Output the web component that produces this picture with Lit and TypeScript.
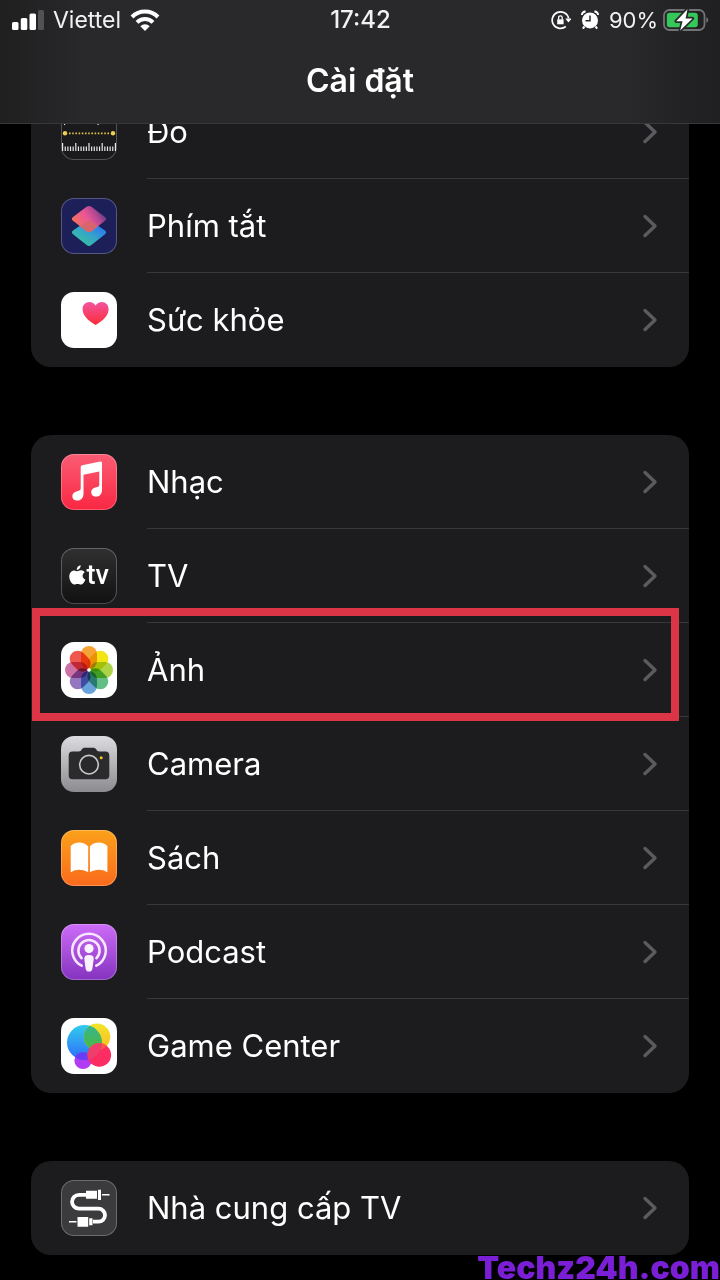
import { LitElement, html, css, svg, TemplateResult } from "lit";
import { customElement, property } from "lit/decorators.js";

/* ---------- App icons, drawn on a 56 x 56 grid ---------- */

const tick = (x: number, h: number) =>
  svg`<rect x=${x} y=${47 - h} width="1.2" height=${h} fill="#e8e8ea"/>`;

const measure = svg`
  <rect width="56" height="56" fill="#1a1a1c"/>
  ${[3, 36.5].map((x) => svg`<rect x=${x} y="16" width="1.2" height="5" fill="#e8e8ea"/>`)}
  <path d="M8 29.3H48" stroke="#e6c544" stroke-width="1.8" stroke-dasharray="1.6 1.6"/>
  <circle cx="4" cy="29.3" r="2.2" fill="#f0d050"/>
  <circle cx="52" cy="29.3" r="2.2" fill="#f0d050"/>
  ${Array.from({ length: 21 }, (_, i) =>
    tick(1 + i * 2.64, i % 5 === 0 ? 8 : 4.5)
  )}`;

const shortcuts = svg`
  <defs>
    <linearGradient id="s1" x1="0.1" y1="0.7" x2="0.9" y2="0.3">
      <stop offset="0" stop-color="#f4705c"/><stop offset="0.5" stop-color="#e8559a"/>
      <stop offset="0.8" stop-color="#b04890"/><stop offset="1" stop-color="#6a3f86"/>
    </linearGradient>
    <linearGradient id="s2" x1="0.2" y1="0.9" x2="0.8" y2="0.2">
      <stop offset="0" stop-color="#36c0a0"/><stop offset="0.5" stop-color="#35a5c8"/>
      <stop offset="1" stop-color="#2a78f0"/>
    </linearGradient>
  </defs>
  <rect width="56" height="56" fill="#1d1f59"/>
  <path d="M25.8 22.9Q28 21.6 30.2 22.9L44 32.6Q46.4 34.4 44 36.2L30.4 47Q28 48.8 25.6 47L12 36.2Q9.6 34.4 12 32.6Z" fill="url(#s2)"/>
  <path d="M25.6 8.8Q28 7 30.4 8.8L44 19Q46.4 21 44 22.8L30.4 33.2Q28 35 25.6 33.2L12 22.8Q9.6 21 12 19Z" fill="url(#s1)"/>
  <path d="M28 22.2L37 28.3L30.4 33.2Q28 35 25.6 33.2L19 28.3Z" fill="#d9656c"/>`;

const health = svg`
  <defs><linearGradient id="h1" x2="0" y2="1">
    <stop offset="0" stop-color="#f2549e"/><stop offset="1" stop-color="#fb2c37"/>
  </linearGradient></defs>
  <rect width="56" height="56" fill="#fff"/>
  <path d="M34.6 33C27 28.5 21.6 23.5 21.6 17.3C21.6 13 24.5 10 28.4 10C31 10 33.2 11.3 34.6 13.5C36 11.3 38.2 10 40.8 10C44.7 10 47.6 13 47.6 17.3C47.6 23.5 42.2 28.5 34.6 33Z" fill="url(#h1)"/>`;

const music = svg`
  <defs><linearGradient id="m1" x2="0" y2="1">
    <stop offset="0" stop-color="#fb5c74"/><stop offset="1" stop-color="#fa2742"/>
  </linearGradient></defs>
  <rect width="56" height="56" fill="url(#m1)"/>
  <path d="M39.3 7.5Q41 7.2 41 8.9V36C41 40 38.5 42.7 35 42.7C32 42.7 30.2 40.8 30.2 38.3C30.2 35.5 32.2 33.9 35 33.3C37.4 32.8 38.3 32.5 38.3 30.5V17.6L22.5 20.7V39.7C22.5 44 19.8 46.6 16.2 46.6C13.2 46.6 11.3 44.7 11.3 42.2C11.3 39.5 13.2 37.8 16 37.2C18.6 36.6 19.7 36.4 19.7 34.3V13Q19.7 11.5 21.2 11.2Z" fill="#fff"/>`;

const appleTv = svg`
  <defs><linearGradient id="t1" x2="0" y2="1">
    <stop offset="0" stop-color="#303031"/><stop offset="1" stop-color="#111112"/>
  </linearGradient></defs>
  <rect width="56" height="56" fill="url(#t1)"/>
  <path d="M19.6 17.3C19.9 19.7 18 21.9 15.8 21.9C15.5 19.7 17.5 17.5 19.6 17.3ZM16.2 23.3C17 23.3 18.2 22.3 20 22.3C21.7 22.3 23 23.1 23.7 24.2C20.7 26 21 30.2 24.4 31.5C23.7 33.5 22 36.6 20 36.6C18.7 36.6 18.2 35.9 16.6 35.9C15 35.9 14.4 36.6 13.2 36.6C11 36.6 8.3 32.7 8.3 28.6C8.3 24.6 10.8 22.4 13.2 22.4C14.6 22.4 15.6 23.3 16.2 23.3Z" fill="#fff"/>
  <text x="25.5" y="36.4" class="tv">tv</text>`;

const petals = ["#f59a23", "#f2e200", "#a6d037", "#55b878", "#5b9bd8", "#8b6bb8", "#c9669f", "#ee4a40"];
const photos = svg`
  <rect width="56" height="56" fill="#fff"/>
  <g class="petals">
    ${petals.map(
      (c, i) => svg`<rect x="20" y="4" width="16" height="23" rx="8" fill=${c}
        fill-opacity="0.92" transform="rotate(${i * 45} 28 28)"/>`
    )}
  </g>
  <circle cx="28" cy="28" r="1.8" fill="#fff"/>`;

const camera = svg`
  <defs><linearGradient id="c1" x2="0" y2="1">
    <stop offset="0" stop-color="#dcdbe0"/><stop offset="1" stop-color="#8c8b90"/>
  </linearGradient></defs>
  <rect width="56" height="56" fill="url(#c1)"/>
  <path d="M11.5 15.5H17.5C19.5 15.5 20 14.8 20.7 13.6C21.5 12.2 22.3 11.7 24 11.7H32C33.7 11.7 34.5 12.2 35.3 13.6C36 14.8 36.5 15.5 38.5 15.5H44.5Q48.3 15.5 48.3 19.3V39.5Q48.3 43.3 44.5 43.3H11.5Q7.7 43.3 7.7 39.5V19.3Q7.7 15.5 11.5 15.5Z" fill="#2b2b2d"/>
  <circle cx="28" cy="28.7" r="9.3" fill="#29292b" stroke="#c9c9cd" stroke-width="1.6"/>
  <circle cx="40.2" cy="21.7" r="1.5" fill="#f5c518"/>`;

const books = svg`
  <defs><linearGradient id="b1" x2="0" y2="1">
    <stop offset="0" stop-color="#fba11b"/><stop offset="1" stop-color="#fb6a1c"/>
  </linearGradient></defs>
  <rect width="56" height="56" fill="url(#b1)"/>
  <path d="M27.2 16.5V42.3C22.5 38.8 14.5 38.8 10.4 42Q9.7 42.4 9.7 41.5V16.2C13.5 11.4 23 11.2 27.2 16.5ZM28.9 16.5C33.1 11.2 42.6 11.4 46.4 16.2V41.5Q46.4 42.4 45.7 42C41.6 38.8 33.6 38.8 28.9 42.3Z" fill="#fff"/>`;

const podcast = svg`
  <defs><linearGradient id="p1" x2="0" y2="1">
    <stop offset="0" stop-color="#cd6cf8"/><stop offset="1" stop-color="#8433bf"/>
  </linearGradient></defs>
  <rect width="56" height="56" fill="url(#p1)"/>
  <g fill="none" stroke="#f7e6ff" stroke-width="2.6" stroke-linecap="round">
    <path d="M20.7 41.7A16.8 16.8 0 1 1 35.3 41.7"/>
    <path d="M20.6 34.2A10.6 10.6 0 1 1 35.4 34.2"/>
  </g>
  <circle cx="28" cy="24.6" r="4.6" fill="#fbf2ff"/>
  <path d="M28 31C31.5 31 33 32.2 32.7 35L31.4 44.5C31.1 46.6 30.2 47.6 28 47.6S24.9 46.6 24.6 44.5L23.3 35C23 32.2 24.5 31 28 31Z" fill="#fbf2ff"/>`;

const gameCenter = svg`
  <defs>
    <linearGradient id="g1" x2="0" y2="1"><stop offset="0" stop-color="#30cdec"/><stop offset="1" stop-color="#2f6cfb"/></linearGradient>
    <linearGradient id="g2" x2="0" y2="1"><stop offset="0" stop-color="#f0e52a"/><stop offset="1" stop-color="#fbbb20"/></linearGradient>
    <linearGradient id="g3" x2="0" y2="1"><stop offset="0" stop-color="#36b59a"/><stop offset="1" stop-color="#4bb83a"/></linearGradient>
    <clipPath id="gb"><circle cx="23.5" cy="24.5" r="17.5"/></clipPath>
    <clipPath id="gy"><circle cx="36" cy="18.8" r="13.3"/></clipPath>
  </defs>
  <rect width="56" height="56" fill="#fff"/>
  <circle cx="22" cy="42.5" r="8.6" fill="#b23bf4"/>
  <circle cx="23.5" cy="24.5" r="17.5" fill="url(#g1)"/>
  <circle cx="22" cy="42.5" r="8.6" fill="#6a3cf5" clip-path="url(#gb)"/>
  <circle cx="36" cy="18.8" r="13.3" fill="url(#g2)"/>
  <circle cx="36" cy="18.8" r="13.3" fill="url(#g3)" clip-path="url(#gb)"/>
  <circle cx="38.3" cy="37" r="11.8" fill="#fb2d63"/>
  <circle cx="38.3" cy="37" r="11.8" fill="#fb5a42" clip-path="url(#gy)"/>
  <circle cx="38.3" cy="37" r="11.8" fill="#ee3f6c" clip-path="url(#gb)"/>`;

const cable = svg`
  <rect width="56" height="56" fill="#3b3b3d"/>
  <path d="M25 14.8H18A6.3 6.3 0 0 0 18 28.7H37.5A6.5 6.5 0 0 1 37.5 41.7H32" fill="none" stroke="#fff" stroke-width="3.8"/>
  <path d="M25 10.8H36V18.8H25ZM37 9.7H40V19.9H37ZM41 14H48.5V15.6H41ZM16.5 37H27.2V46.8H16.5ZM28.2 38.3H31.5V45.3H28.2ZM8 41H15.5V42.6H8Z" fill="#fff"/>`;

interface Row {
  label: string;
  icon: TemplateResult;
  edge?: boolean;
  marked?: boolean;
}

const groups: Row[][] = [
  [
    { label: "Đo", icon: measure, edge: true },
    { label: "Phím tắt", icon: shortcuts, edge: true },
    { label: "Sức khỏe", icon: health },
  ],
  [
    { label: "Nhạc", icon: music, edge: true },
    { label: "TV", icon: appleTv, edge: true },
    { label: "Ảnh", icon: photos, marked: true },
    { label: "Camera", icon: camera },
    { label: "Sách", icon: books, edge: true },
    { label: "Podcast", icon: podcast, edge: true },
    { label: "Game Center", icon: gameCenter },
  ],
  [{ label: "Nhà cung cấp TV", icon: cable, edge: true }],
];

@customElement("status-bar")
export class StatusBar extends LitElement {
  static styles = css`
    :host {
      display: grid;
      grid-template-columns: 1fr auto 1fr;
      align-items: center;
      height: 40px;
      padding: 0 11px 0 12px;
      font-size: 23px;
      line-height: 28px;
      color: #f2f2f4;
    }
    .side {
      display: flex;
      align-items: center;
      gap: 9px;
    }
    .end {
      justify-content: flex-end;
    }
    .battery {
      display: flex;
      align-items: center;
      gap: 5px;
      font-size: 22px;
    }
    .time {
      font-size: 24px;
      font-weight: 500;
    }
    svg {
      display: block;
    }
  `;

  render() {
    return html`
      <div class="side">
        <svg width="32" height="20" viewBox="0 0 32 20" role="img" aria-label="Signal">
          <g fill="#fff">
            <rect y="12" width="6.5" height="8" rx="1.5"/>
            <rect x="8.8" y="8" width="6.5" height="12" rx="1.5"/>
            <rect x="17.5" y="3.5" width="6.5" height="16.5" rx="1.5"/>
            <rect x="26" width="6" height="20" rx="1.5" fill="#525254"/>
          </g>
        </svg>
        <span>Viettel</span>
        <svg width="30" height="22" viewBox="0 0 30 22" role="img" aria-label="Wi-Fi">
          <g fill="none" stroke="#fff" stroke-width="4">
            <path d="M2 8A18.4 18.4 0 0 1 28 8"/>
            <path d="M7 13.3A11.4 11.4 0 0 1 23 13.3"/>
          </g>
          <path d="M10.3 17.2A6.8 6.8 0 0 1 19.7 17.2L15 22Z" fill="#fff"/>
        </svg>
      </div>
      <span class="time">17:42</span>
      <div class="side end">
        <svg width="20" height="20" viewBox="0 0 20 20" role="img" aria-label="Rotation lock">
          <path d="M14.8 16.5A8.3 8.3 0 1 1 17.6 8.3" fill="none" stroke="#fff" stroke-width="1.7"/>
          <path d="M14.3 8.5H20.6L17.4 12.5Z" fill="#fff"/>
          <path d="M6.2 9.3H12.6V14.3H6.2Z" fill="#fff"/>
          <path d="M7.6 9.5V7.6A1.8 1.8 0 0 1 11.2 7.6V9.5" fill="none" stroke="#fff" stroke-width="1.3"/>
        </svg>
        <svg width="20" height="20" viewBox="0 0 20 20" role="img" aria-label="Alarm">
          <circle cx="10" cy="10.4" r="8" fill="#fff"/>
          <path d="M2 5A3 3 0 0 1 5.6 1.7M18 5A3 3 0 0 0 14.4 1.7" fill="none" stroke="#fff" stroke-width="2"/>
          <path d="M4.5 16.5L2.8 18.6M15.5 16.5L17.2 18.6" stroke="#fff" stroke-width="2"/>
          <path d="M10 5.5V10.7H5.5" fill="none" stroke="#28282a" stroke-width="1.5"/>
        </svg>
        <div class="battery">
          <span>90%</span>
          <svg width="46" height="24" viewBox="0 0 46 24" role="img" aria-label="Charging">
            <rect x="1" y="2" width="40.5" height="20" rx="5.5" fill="none" stroke="#737375" stroke-width="1.8"/>
            <path d="M43.3 9.3Q45.3 10 45.3 12T43.3 14.7Z" fill="#737375"/>
            <rect x="3.8" y="4.7" width="31" height="14.6" rx="3" fill="#35c759"/>
            <path d="M24.5 1.2L13.2 13.2H19.6L17.2 22.6L29.5 10.4H22.6Z" fill="#fff" stroke="#28282a" stroke-width="3.4" paint-order="stroke" stroke-linejoin="round"/>
          </svg>
        </div>
      </div>
    `;
  }
}

@customElement("settings-row")
export class SettingsRow extends LitElement {
  @property({ attribute: false }) row!: Row;

  static styles = css`
    :host {
      display: block;
      position: relative;
    }
    .row {
      display: flex;
      align-items: center;
      gap: 30px;
      height: 94px;
      padding-left: 30px;
      color: #fff;
      text-decoration: none;
    }
    .icon {
      flex: none;
      border-radius: 13px;
    }
    .edge {
      fill: none;
      stroke: #ffffff;
      stroke-opacity: 0.25;
      stroke-width: 2;
    }
    .petals rect {
      mix-blend-mode: multiply;
    }
    .petals {
      isolation: isolate;
    }
    .tv {
      font: 500 27px Roboto, sans-serif;
      fill: #fff;
    }
    .body {
      flex: 1;
      display: flex;
      align-items: center;
      justify-content: space-between;
      align-self: stretch;
      padding-right: 31px;
      border-bottom: 1px solid var(--separator, transparent);
      font-size: 31px;
      line-height: 40px;
    }
    .mark {
      position: absolute;
      inset: -15px 10px -4px 1px;
      border: 8px solid #dc3545;
      pointer-events: none;
      z-index: 1;
    }
  `;

  render() {
    const { label, icon, edge, marked } = this.row;
    return html`
      <a class="row" href="#">
        <svg class="icon" width="56" height="56" viewBox="0 0 56 56" aria-hidden="true">
          ${icon}
          ${edge ? svg`<rect class="edge" width="56" height="56" rx="13"/>` : null}
        </svg>
        <span class="body">
          <span>${label}</span>
          <svg width="16" height="24" viewBox="0 0 16 24" aria-hidden="true">
            <path d="M3 2.5L13 12L3 21.5" fill="none" stroke="#5b5b5f" stroke-width="3.4" stroke-linecap="round" stroke-linejoin="round"/>
          </svg>
        </span>
      </a>
      ${marked ? html`<div class="mark"></div>` : null}
    `;
  }
}

@customElement("app-root")
export class AppRoot extends LitElement {
  static styles = css`
    :host {
      display: flex;
      flex-direction: column;
      position: relative;
      height: 100vh;
      overflow: hidden;
      background: #000;
      font-family: Inter, "Liberation Sans", sans-serif;
    }
    .header {
      flex: none;
      border-bottom: 1px solid #38383a;
      background: linear-gradient(90deg, #1f1f20, #29292b 12%, #29292b 86%, #1f1f21);
    }
    .title {
      margin: 0;
      padding: 21px 0 22px;
      font-size: 32px;
      line-height: 40px;
      font-weight: 600;
      text-align: center;
      color: #fff;
    }
    .scroller {
      flex: 1;
      min-height: 0;
      overflow: hidden;
    }
    .groups {
      display: flex;
      flex-direction: column;
      gap: 68px;
      margin-top: -39px;
      padding: 0 31px;
    }
    .group {
      margin: 0;
      padding: 0;
      list-style: none;
      border-radius: 20px;
      background: #1c1c1e;
    }
    .item:not(:last-child) {
      --separator: #38383a;
    }
    .watermark {
      position: absolute;
      right: 0;
      bottom: 0;
      font: 900 32px/24px Inter, sans-serif;
      color: #7a1fd6;
    }
  `;

  render() {
    return html`
      <header class="header">
        <status-bar></status-bar>
        <h1 class="title">Cài đặt</h1>
      </header>
      <main class="scroller">
        <div class="groups">
          ${groups.map(
            (rows) => html`<ul class="group">
              ${rows.map((row) => html`<li class="item"><settings-row .row=${row}></settings-row></li>`)}
            </ul>`
          )}
        </div>
      </main>
      <span class="watermark">Techz24h.com</span>
    `;
  }
}
